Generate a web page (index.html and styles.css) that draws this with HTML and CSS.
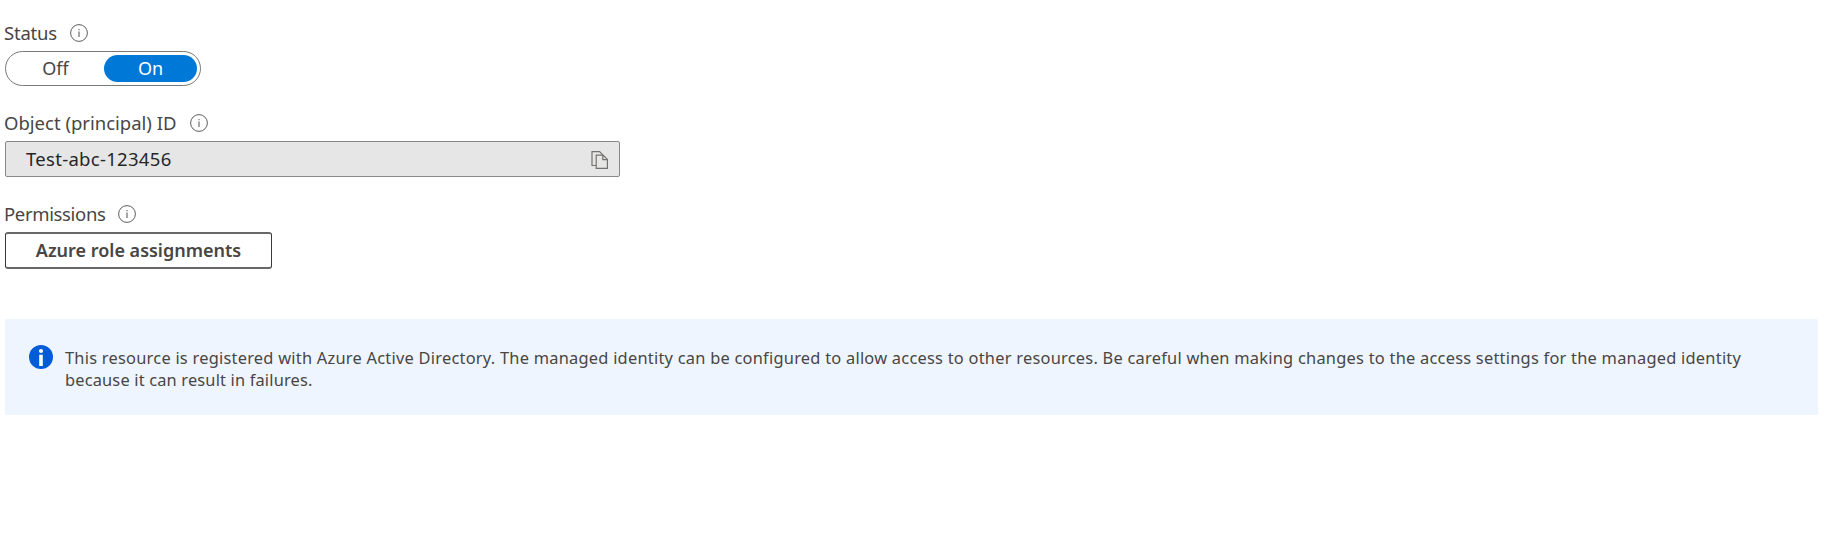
FILE: index.html
```html
<!DOCTYPE html>
<html lang="en">
<head>
<meta charset="utf-8">
<title>Identity</title>
<link rel="stylesheet" href="styles.css">
</head>
<body>
<svg width="0" height="0" class="defs" aria-hidden="true">
  <symbol id="info" viewBox="0 0 18 18">
    <circle cx="9" cy="9" r="8.4" fill="none" stroke="#605e5c" stroke-width="1"/>
    <path d="M9 7.4V13M9 4.9v1.3" fill="none" stroke="#605e5c" stroke-width="1.1"/>
  </symbol>
</svg>
<main class="page">
  <section class="field status">
    <div class="label"><span class="t-status">Status</span><svg class="hint"><use href="#info"/></svg></div>
    <div class="toggle">
      <button class="option"><span>Off</span></button>
      <button class="option selected"><span>On</span></button>
    </div>
  </section>
  <section class="field object">
    <div class="label"><span class="t-object">Object (principal) ID</span><svg class="hint"><use href="#info"/></svg></div>
    <div class="readonly">
      <span class="value">Test-abc-123456</span>
      <svg class="copy" viewBox="0 0 18 18" fill="none" stroke="#74726f" stroke-width="1.2">
        <path d="M5 14.5H1V.7h7.6l3.2 3.2"/>
        <path d="M5.2 4.2h6.9l4.3 4.2v9H5.2z"/>
        <path d="M11.8 4.3v4.3h4.4"/>
      </svg>
    </div>
  </section>
  <section class="field permissions">
    <div class="label"><span class="t-perm">Permissions</span><svg class="hint"><use href="#info"/></svg></div>
    <button class="roles"><span>Azure role assignments</span></button>
  </section>
  <aside class="notice">
    <svg class="badge" viewBox="0 0 24 24">
      <circle cx="12" cy="12" r="12" fill="#015cda"/>
      <circle cx="12" cy="6" r="2.1" fill="#fff"/>
      <path d="M10.2 9.8h3.6V21h-3.6z" fill="#fff"/>
    </svg>
    <p class="message"><span class="line1">This resource is registered with Azure Active Directory. The managed identity can be configured to allow access to other resources. Be careful when making changes to the access settings for the managed identity</span><br><span class="line2">because it can result in failures.</span></p>
  </aside>
</main>
</body>
</html>
```
FILE: styles.css
```css
* { box-sizing: border-box; }
body {
  margin: 0;
  background: #fff;
  color: #484644;
  font-family: "Noto Sans", "Open Sans", sans-serif;
  font-size: 18px;
  line-height: 24px;
}
button {
  font: inherit;
  color: inherit;
  margin: 0;
  padding: 0;
  border: 0;
  background: none;
}
.defs { display: none; }
.page { padding: 21px 9px 0 5px; }
.field { height: 90px; }
.object { height: 91px; }
.permissions { height: 117px; }
.label { display: flex; align-items: center; gap: 13px; height: 24px; font-size: 18.5px; }
.label span { margin-left: -1px; white-space: nowrap; }
.t-status { letter-spacing: -0.2px; }
.t-perm { letter-spacing: -0.35px; }
.hint { width: 18px; height: 18px; }
.toggle {
  display: flex;
  width: 196px;
  height: 35px;
  margin-top: 6px;
  padding: 3px;
  border: 1px solid #7a7876;
  border-radius: 18px;
}
.option { flex: 1; border-radius: 14px; line-height: 24px; padding-bottom: 2px; }
.option:first-child { padding-right: 2px; }
.selected { background: #0078d7; color: #fff; }
.readonly {
  display: flex;
  align-items: center;
  justify-content: space-between;
  width: 615px;
  height: 36px;
  margin-top: 6px;
  padding: 0 10px 0 20px;
  border: 1px solid #8a8886;
  border-radius: 2px;
  background: #e6e6e6;
  color: #262626;
}
.value { font-size: 18.5px; letter-spacing: 0.3px; padding-bottom: 1px; }
.copy { width: 18px; height: 18px; margin-top: 2px; }
.roles {
  width: 267px;
  height: 37px;
  margin-top: 6px;
  padding: 0 0 2px;
  border: 1px solid #3b3a39;
  border-top: 2px solid #6a6866;
  border-bottom: 2px solid #6a6866;
  border-radius: 3px;
  font-weight: 600;
  line-height: 30px;
}
.notice {
  display: flex;
  gap: 12px;
  height: 96px;
  padding: 26px 25px 0 24px;
  background: #eef5ff;
  border-radius: 2px;
}
.badge { width: 24px; height: 24px; flex: none; }
.message { margin: 2px 0 0; font-size: 16.4px; line-height: 22px; white-space: nowrap; }
.line1 { letter-spacing: 0.244px; }
.line2 { letter-spacing: 0.17px; }
```
